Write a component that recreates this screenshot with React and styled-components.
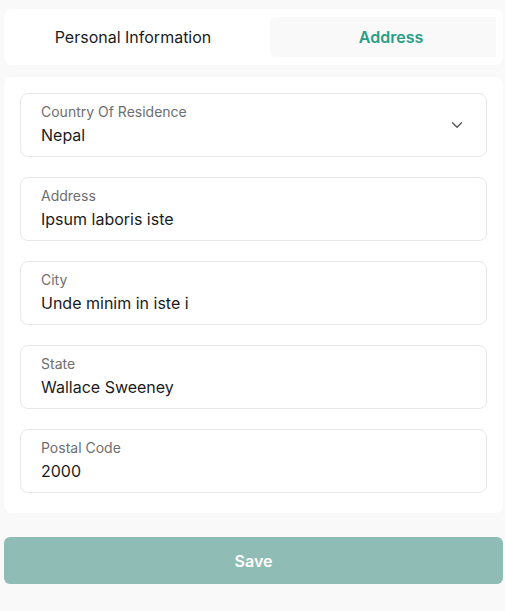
import React from "react";
import styled, { createGlobalStyle } from "styled-components";

const Global = createGlobalStyle`
  html, body { margin: 0; padding: 0; background: #f9f9f9; }
  body { font-family: Inter, "Noto Sans", sans-serif; color: #1b1b1b; }
  * { box-sizing: border-box; }
`;

const Page = styled.div`
  padding: 9px 2px 0 4px;
  display: flex;
  flex-direction: column;
`;

const TabCard = styled.div`
  background: #ffffff;
  border-radius: 8px;
  padding: 8px 7px 8px 8px;
`;

const TabList = styled.div`
  display: flex;
  gap: 16px;
  overflow: hidden;
`;

const Tab = styled.button`
  flex: 0 0 50%;
  height: 40px;
  border: none;
  border-radius: 6px;
  font-family: inherit;
  font-size: 16px;
  background: ${(p) => (p.$active ? "#f9f9f9" : "transparent")};
  color: ${(p) => (p.$active ? "#2a9d85" : "#1b1b1b")};
  font-weight: ${(p) => (p.$active ? 600 : 400)};
  cursor: pointer;
`;

const FormCard = styled.div`
  margin-top: 12px;
  background: #ffffff;
  border-radius: 8px;
  padding: 16px 16px 20px;
  display: flex;
  flex-direction: column;
  gap: 20px;
`;

const Field = styled.div`
  border: 1px solid #e8e8e8;
  border-radius: 8px;
  padding: 8px 20px 8px;
  display: flex;
  align-items: flex-start;
  height: 64px;
`;

const FieldText = styled.div`
  flex: 1;
  display: flex;
  flex-direction: column;
`;

const Label = styled.span`
  font-size: 14px;
  line-height: 20px;
  color: #6e6e6e;
`;

const Value = styled.span`
  font-size: 16px;
  line-height: 26px;
  color: #1b1b1b;
`;

const Chevron = styled.svg`
  width: 18px;
  height: 18px;
  color: #555555;
  margin-top: 14px;
`;

const SaveButton = styled.button`
  margin-top: 24px;
  height: 47px;
  border: none;
  border-radius: 6px;
  background: #8fbdb5;
  color: #ffffff;
  font-family: inherit;
  font-size: 16px;
  font-weight: 600;
`;

const fields = [
  { label: "Country Of Residence", value: "Nepal", select: true },
  { label: "Address", value: "Ipsum laboris iste" },
  { label: "City", value: "Unde minim in iste i" },
  { label: "State", value: "Wallace Sweeney" },
  { label: "Postal Code", value: "2000" },
];

export default function App() {
  return (
    <>
      <Global />
      <Page>
        <TabCard>
          <TabList>
            <Tab>Personal Information</Tab>
            <Tab $active>Address</Tab>
          </TabList>
        </TabCard>
        <FormCard>
          {fields.map((f) => (
            <Field key={f.label}>
              <FieldText>
                <Label>{f.label}</Label>
                <Value>{f.value}</Value>
              </FieldText>
              {f.select && (
                <Chevron viewBox="0 0 24 24" fill="none" stroke="currentColor" strokeWidth="1.75" strokeLinecap="round" strokeLinejoin="round">
                  <path d="m6 9 6 6 6-6" />
                </Chevron>
              )}
            </Field>
          ))}
        </FormCard>
        <SaveButton>Save</SaveButton>
      </Page>
    </>
  );
}
